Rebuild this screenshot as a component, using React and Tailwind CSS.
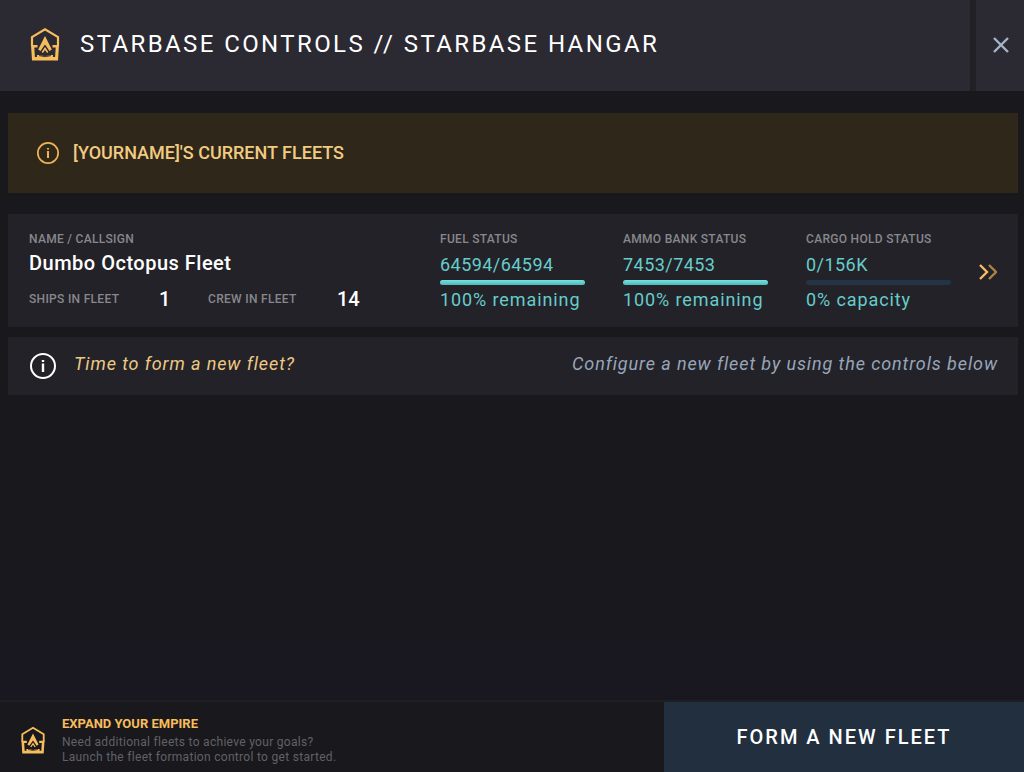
import React from 'react';

const stats = [
  { label: 'FUEL STATUS', value: '64594/64594', percent: 100, note: '100% remaining' },
  { label: 'AMMO BANK STATUS', value: '7453/7453', percent: 100, note: '100% remaining' },
  { label: 'CARGO HOLD STATUS', value: '0/156K', percent: 0, note: '0% capacity' }
];

function HangarIcon({ className }) {
  return (
    <svg className={className} viewBox="0 0 30 34" fill="none" aria-hidden="true">
      <path d="M2 19V10L15 2.200L28 10V19" stroke="#f7bd5c" strokeWidth="2.200" />
      <path d="M1 18H7.500V20.500H4.300L4.900 30H7V28H9Q15 30 21 28H23V30H25.100L25.700 20.500H22.500V18H29L28 33.500H2Z" fill="#f7bd5c" />
      <path d="M9 28.600Q15 30.800 21 28.600" stroke="#2b2932" strokeWidth="0.900" />
      <path d="M15 9L21.800 22.500L19.500 24L15 17.500L10.500 24L8.200 22.500Z" fill="#f7bd5c" />
      <path d="M12.300 25.500L15 21.500L17.700 25.500" stroke="#f7bd5c" strokeWidth="1.600" />
    </svg>
  );
}

function InfoIcon({ className }) {
  return (
    <svg className={className} viewBox="0 0 26 26" fill="none" stroke="currentColor" aria-hidden="true">
      <circle cx="13" cy="13" r="12" strokeWidth="2" />
      <path d="M13 10.500V19M13 7V9" strokeWidth="2.400" />
    </svg>
  );
}

function Stat({ label, value, percent, note }) {
  return (
    <div className="w-[145px] text-lg leading-6 tracking-wide text-[#66cdcc]">
      <div className="text-xs leading-4 font-medium tracking-wide whitespace-nowrap text-[#88888c]">{label}</div>
      <div className="mt-1.5">{value}</div>
      <div className="mt-[3px] h-[5px] rounded-full bg-[#243447]">
        <div className="h-full rounded-full bg-linear-to-b from-[#72e4e4] to-[#55b5b7]" style={{ width: `${percent}%` }} />
      </div>
      <div className="mt-[3px] tracking-wider whitespace-nowrap">{note}</div>
    </div>
  );
}

export default function App() {
  return (
    <div className="flex min-h-screen flex-col bg-linear-to-b from-[#19181d] from-70% to-[#191722] font-['Roboto',sans-serif] text-white">
      <header className="flex h-[91px] gap-1.5 bg-[#212025]">
        <div className="flex flex-1 items-center gap-5 bg-[#2b2932] pb-1 pl-[30px]">
          <HangarIcon className="h-[34px] w-[30px]" />
          <h1 className="text-2xl leading-8 tracking-widest">STARBASE CONTROLS // STARBASE HANGAR</h1>
        </div>
        <button type="button" aria-label="Close" className="flex w-12 items-center justify-center bg-[#2b2932] pb-0.5 pl-0.5 text-[#a5b5c9]">
          <svg className="h-4 w-4" viewBox="0 0 16 16" stroke="currentColor" strokeWidth="2.400" aria-hidden="true">
            <path d="M1 1L15 15M15 1L1 15" />
          </svg>
        </button>
      </header>

      <main className="flex-1 pt-[22px] pr-1.5 pl-2">
        <div className="flex h-20 items-center gap-3.5 bg-[#2f2719] pl-[29px] text-[#f2cb83]">
          <InfoIcon className="h-[22px] w-[22px] text-[#f0b452]" />
          <h2 className="text-lg font-medium">[YOURNAME]'S CURRENT FLEETS</h2>
        </div>

        <section className="mt-[21px] flex items-start bg-[#232228] pt-[17px] pr-[21px] pb-[15px] pl-[21px]">
          <div className="flex-1">
            <div className="text-xs leading-4 font-medium tracking-wide text-[#88888c]">NAME / CALLSIGN</div>
            <div className="mt-1 text-xl leading-6 font-medium tracking-wide">Dumbo Octopus Fleet</div>
            <div className="mt-3 flex items-center text-xl leading-6 font-medium">
              <span className="w-[130px] text-xs tracking-wide text-[#88888c]">SHIPS IN FLEET</span>
              <span className="w-[49px]">1</span>
              <span className="w-[129px] text-xs tracking-wide text-[#88888c]">CREW IN FLEET</span>
              <span>14</span>
            </div>
          </div>
          <div className="flex gap-[38px]">
            {stats.map((stat) => (
              <Stat key={stat.label} {...stat} />
            ))}
          </div>
          <button type="button" aria-label="Open fleet" className="ml-7 self-center">
            <svg className="h-4 w-[18px]" viewBox="0 0 18 16" fill="none" strokeWidth="2.400" aria-hidden="true">
              <path d="M1 1L8 8L1 15" stroke="#f7bd5c" />
              <path d="M10 1L17 8L10 15" stroke="#a88447" />
            </svg>
          </button>
        </section>

        <section className="mt-2.5 flex h-[58px] items-center bg-[#232228] pr-5 pl-[22px] text-lg tracking-wider italic">
          <InfoIcon className="h-[26px] w-[26px]" />
          <p className="ml-[18px] flex-1 pb-1 text-[#edc983]">Time to form a new fleet?</p>
          <p className="pb-1 text-[#97a6ba]">Configure a new fleet by using the controls below</p>
        </section>
      </main>

      <footer className="flex h-[72px] border-t-2 border-[#1f1e23] bg-[#19181d]">
        <div className="flex flex-1 items-center gap-4 pt-1.5 pl-5">
          <HangarIcon className="h-7 w-[26px]" />
          <div className="text-xs leading-[15px] tracking-wide text-[#626166]">
            <h3 className="mb-1 text-[13px] font-bold tracking-normal text-[#f7bd5c]">EXPAND YOUR EMPIRE</h3>
            <p>Need additional fleets to achieve your goals?</p>
            <p>Launch the fleet formation control to get started.</p>
          </div>
        </div>
        <button type="button" className="w-[360px] bg-[#222f3f] text-xl font-medium tracking-widest">FORM A NEW FLEET</button>
      </footer>
    </div>
  );
}
